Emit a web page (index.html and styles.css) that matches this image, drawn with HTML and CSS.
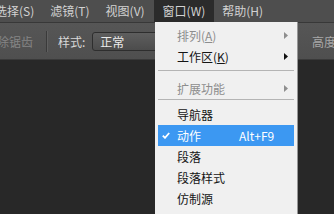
FILE: index.html
```html
<!DOCTYPE html>
<html lang="zh">
<head>
<meta charset="utf-8">
<link rel="stylesheet" href="styles.css">
</head>
<body>
<div class="app">
  <div class="menubar">
    <span class="mb-item first">选择(S)</span>
    <span class="mb-item">滤镜(T)</span>
    <span class="mb-item">视图(V)</span>
    <span class="mb-item active">窗口(W)</span>
    <span class="mb-item">帮助(H)</span>
  </div>
  <div class="options">
    <span class="opt-disabled">除锯齿</span>
    <span class="opt-sep"></span>
    <span class="opt-label">样式:</span>
    <span class="opt-select">正常</span>
    <span class="opt-spacer"></span>
    <span class="opt-right">高度</span>
  </div>
  <div class="workspace"></div>

  <div class="menu">
    <div class="mi disabled"><span class="chk"></span><span class="lbl">排列(<u>A</u>)</span><svg class="arr" width="4" height="7" viewBox="0 0 4 7"><polygon points="0,0 4,3.5 0,7" fill="#8e8e8e"/></svg></div>
    <div class="mi"><span class="chk"></span><span class="lbl">工作区(<u>K</u>)</span><svg class="arr" width="4" height="7" viewBox="0 0 4 7"><polygon points="0,0 4,3.5 0,7" fill="#111"/></svg></div>
    <div class="sep sep-a"></div>
    <div class="mi disabled"><span class="chk"></span><span class="lbl">扩展功能</span><svg class="arr" width="4" height="7" viewBox="0 0 4 7"><polygon points="0,0 4,3.5 0,7" fill="#8e8e8e"/></svg></div>
    <div class="sep sep-b"></div>
    <div class="mi"><span class="chk"></span><span class="lbl">导航器</span></div>
    <div class="mi hl"><span class="chk"><svg width="8" height="7" viewBox="0 0 8 7"><polyline points="0.8,3.6 3,5.8 7.2,1" fill="none" stroke="#fff" stroke-width="1.8"/></svg></span><span class="lbl">动作</span><span class="sc">Alt+F9</span></div>
    <div class="mi"><span class="chk"></span><span class="lbl">段落</span></div>
    <div class="mi"><span class="chk"></span><span class="lbl">段落样式</span></div>
    <div class="mi"><span class="chk"></span><span class="lbl">仿制源</span></div>
  </div>
</div>
</body>
</html>
```
FILE: styles.css
```css
html, body {
  margin: 0;
  padding: 0;
}
body {
  width: 334px;
  height: 214px;
  overflow: hidden;
  background: #282828;
  font-family: "Noto Sans CJK SC", "Microsoft YaHei", sans-serif;
  font-size: 12px;
}
.app {
  position: relative;
  width: 334px;
  height: 214px;
  display: flex;
  flex-direction: column;
  overflow: hidden;
}
.menubar {
  height: 22px;
  flex: none;
  display: flex;
  align-items: stretch;
  background: #4e4e4e;
  border-bottom: 1px solid #383838;
  color: #d2d2d2;
}
.mb-item {
  display: flex;
  align-items: center;
  padding: 0 8px;
  white-space: nowrap;
  line-height: 1;
}
.mb-item.first {
  margin-left: -13px;
}
.mb-item.active {
  background: #2b2b2b;
  padding: 0 9px;
  margin-left: 1px;
}
.options {
  height: 36px;
  flex: none;
  display: flex;
  align-items: center;
  background: linear-gradient(#565656, #4f4f4f);
  border-bottom: 1px solid #3a3a3a;
  white-space: nowrap;
}
.opt-disabled {
  color: #858585;
  margin-left: -3px;
}
.opt-sep {
  width: 1px;
  height: 21px;
  background: #3a3a3a;
  border-right: 1px solid #606060;
  margin: 0 10px 0 13px;
}
.opt-label {
  color: #d8d8d8;
}
.opt-select {
  margin-left: 7px;
  height: 17px;
  width: 120px;
  flex: none;
  border: 1px solid #2e2e2e;
  border-radius: 3px;
  background: linear-gradient(#5e5e5e, #4c4c4c);
  color: #ececec;
  display: flex;
  align-items: center;
  padding-left: 7px;
  box-sizing: content-box;
}
.opt-spacer {
  flex: 1;
}
.opt-right {
  color: #a8a8a8;
  margin-right: -2px;
}
.workspace {
  flex: 1;
  background: #282828;
}
.menu {
  position: absolute;
  left: 155px;
  top: 22px;
  width: 136px;
  height: 200px;
  padding: 3px 3px 0 3px;
  background: #f0f0f0;
  border-right: 1px solid #979797;
  color: #151515;
}
.mi {
  height: 21px;
  display: flex;
  align-items: center;
  white-space: nowrap;
  line-height: 1;
}
.mi.disabled {
  color: #8d8d8d;
}
.mi.hl {
  background: #3c98f2;
  color: #ffffff;
}
.chk {
  width: 19px;
  flex: none;
  display: flex;
  align-items: center;
  padding-left: 4px;
  box-sizing: border-box;
}
.chk svg {
  display: block;
}
.lbl {
  width: 62px;
  flex: none;
}
.lbl u {
  text-decoration: underline;
  text-underline-offset: 1px;
}
.sc {
  flex: none;
}
.arr {
  margin-left: auto;
  margin-right: 6px;
  display: block;
}
.sep {
  height: 1px;
  background: #b4b4b4;
}
.sep-a {
  margin: 3px 0 7px 0;
}
.sep-b {
  margin: 0 0 4px 0;
}
```
